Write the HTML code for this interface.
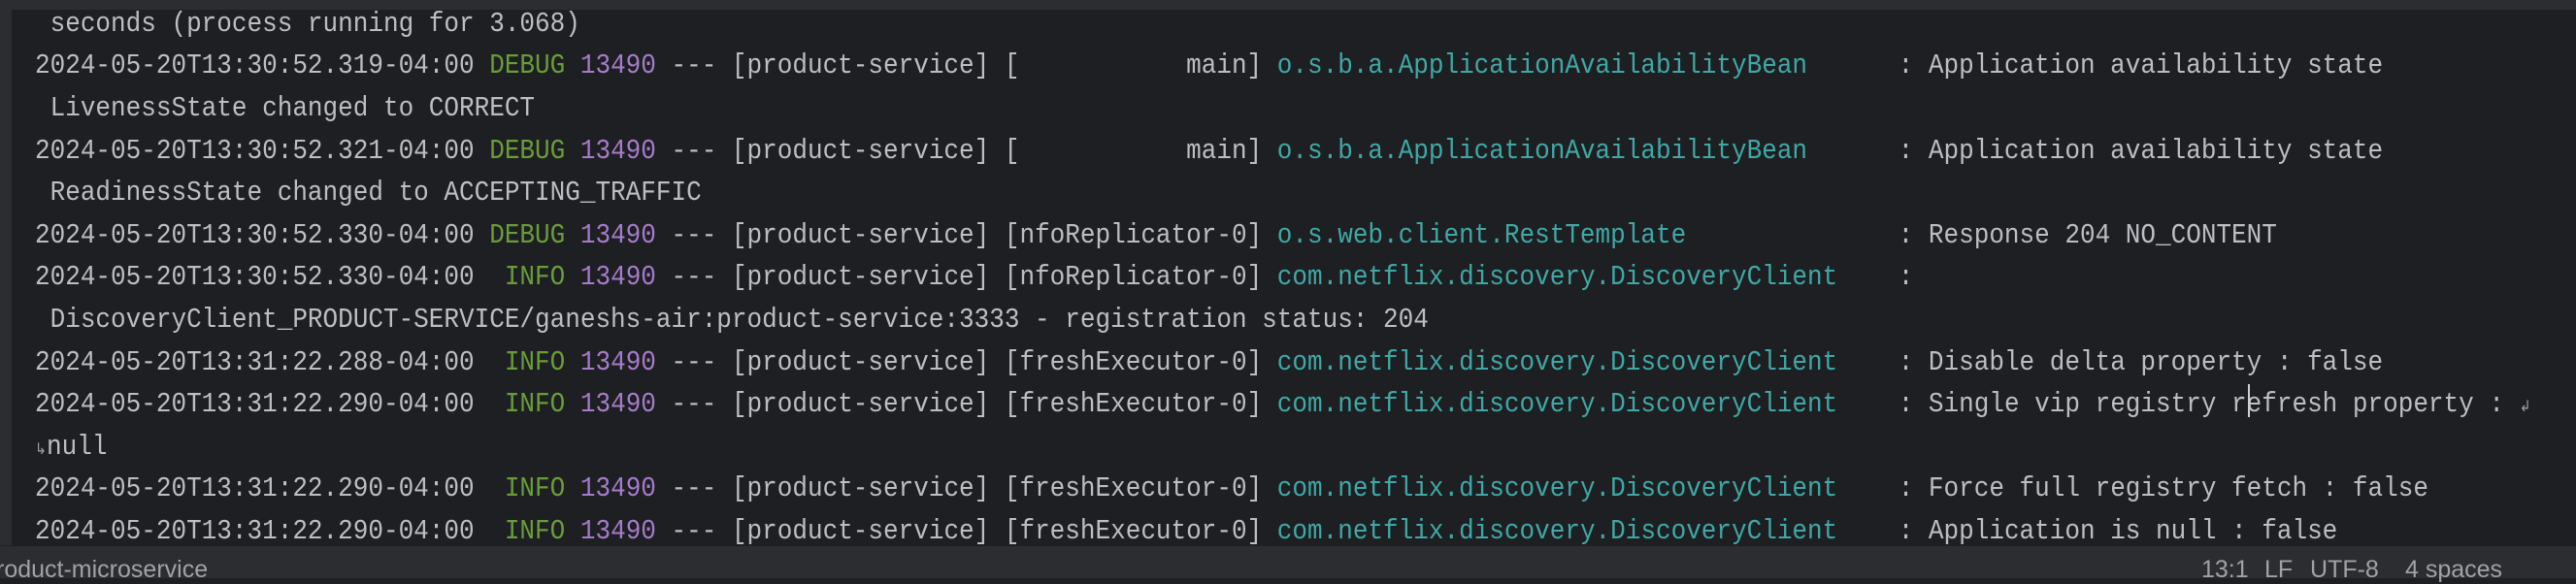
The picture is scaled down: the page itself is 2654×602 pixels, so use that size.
<!DOCTYPE html>
<html><head><meta charset="utf-8"><style>
html,body{margin:0;padding:0;width:2654px;height:596px;overflow:hidden;background:#1e1f22;}
.top{position:absolute;left:0;top:0;width:2654px;height:10px;background:#2b2d30;}
.gut{position:absolute;left:0;top:10px;width:12px;height:552px;background:#2b2d30;}
.status{position:absolute;left:0;top:563px;width:2654px;height:33px;background:#2b2d30;color:#a0a2a8;font-family:"Liberation Sans",sans-serif;font-size:25px;}
.status span{position:absolute;top:10px;white-space:pre;}
.code{position:absolute;left:35.5px;top:2.75px;transform:scaleX(0.8968);transform-origin:0 0;font-family:"Liberation Mono",monospace;font-size:29px;line-height:43.6px;color:#bcbec4;white-space:pre;}
.code div{height:43.6px;overflow:visible;}
.g{color:#6a9c3a}.p{color:#a77bcc}.t{color:#3fa8a6}
.ic{font-size:16px;line-height:10px;color:#9da0a8;}
.cur{position:absolute;left:2316px;top:396px;width:2px;height:34px;background:#ced0d6;}
</style></head><body>
<div class="top"></div><div class="gut"></div>
<div class="code"><div> seconds (process running for 3.068)</div><div>2024-05-20T13:30:52.319-04:00 <span class="g">DEBUG</span> <span class="p">13490</span> --- [product-service] [           main] <span class="t">o.s.b.a.ApplicationAvailabilityBean     </span> : Application availability state</div><div> LivenessState changed to CORRECT</div><div>2024-05-20T13:30:52.321-04:00 <span class="g">DEBUG</span> <span class="p">13490</span> --- [product-service] [           main] <span class="t">o.s.b.a.ApplicationAvailabilityBean     </span> : Application availability state</div><div> ReadinessState changed to ACCEPTING_TRAFFIC</div><div>2024-05-20T13:30:52.330-04:00 <span class="g">DEBUG</span> <span class="p">13490</span> --- [product-service] [nfoReplicator-0] <span class="t">o.s.web.client.RestTemplate             </span> : Response 204 NO_CONTENT</div><div>2024-05-20T13:30:52.330-04:00  <span class="g">INFO</span> <span class="p">13490</span> --- [product-service] [nfoReplicator-0] <span class="t">com.netflix.discovery.DiscoveryClient   </span> :</div><div> DiscoveryClient_PRODUCT-SERVICE/ganeshs-air:product-service:3333 - registration status: 204</div><div>2024-05-20T13:31:22.288-04:00  <span class="g">INFO</span> <span class="p">13490</span> --- [product-service] [freshExecutor-0] <span class="t">com.netflix.discovery.DiscoveryClient   </span> : Disable delta property : false</div><div>2024-05-20T13:31:22.290-04:00  <span class="g">INFO</span> <span class="p">13490</span> --- [product-service] [freshExecutor-0] <span class="t">com.netflix.discovery.DiscoveryClient   </span> : Single vip registry refresh property : <span class="ic">↲</span></div><div><span class="ic">↳</span>null</div><div>2024-05-20T13:31:22.290-04:00  <span class="g">INFO</span> <span class="p">13490</span> --- [product-service] [freshExecutor-0] <span class="t">com.netflix.discovery.DiscoveryClient   </span> : Force full registry fetch : false</div><div>2024-05-20T13:31:22.290-04:00  <span class="g">INFO</span> <span class="p">13490</span> --- [product-service] [freshExecutor-0] <span class="t">com.netflix.discovery.DiscoveryClient   </span> : Application is null : false</div></div>
<div class="cur"></div>
<div class="status"><span style="left:-4px">roduct-microservice</span><span style="left:2268px">13:1</span><span style="left:2333px">LF</span><span style="left:2380px">UTF-8</span><span style="left:2478px">4 spaces</span></div>
</body></html>
